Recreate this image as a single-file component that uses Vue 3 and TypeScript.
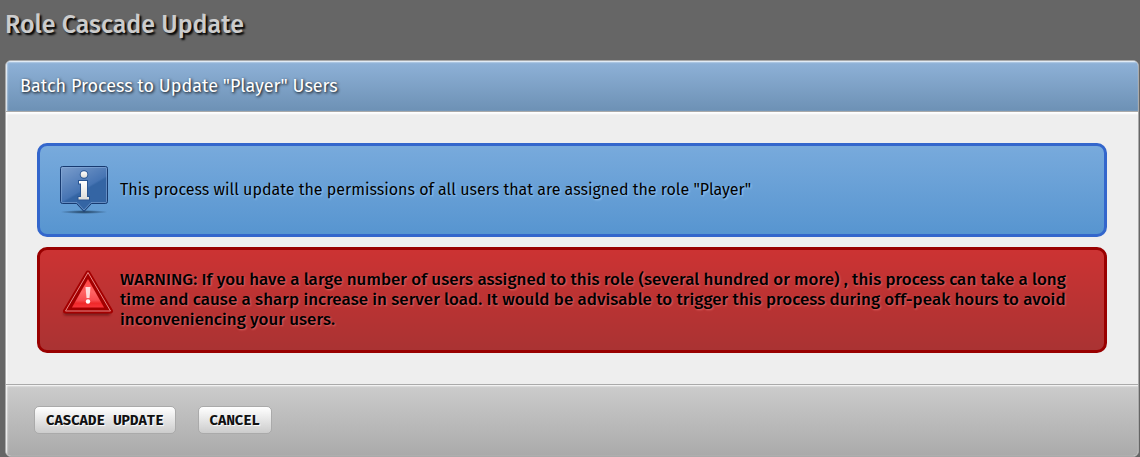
<script setup lang="ts">
import { ref } from 'vue'

const role = ref<string>('Player')
</script>

<template>
  <main class="page">
    <h1>Role Cascade Update</h1>
    <form class="panel" @submit.prevent>
      <header class="panel-header">
        <h2>Batch Process to Update "{{ role }}" Users</h2>
      </header>
      <div class="panel-body">
        <section class="notice info">
          <svg class="icon" viewBox="0 0 48 48" aria-hidden="true">
            <defs>
              <linearGradient id="infoFill" x1="0" y1="0" x2="0.6" y2="1">
                <stop offset="0" stop-color="#7d9fcd" />
                <stop offset="0.58" stop-color="#4674b3" />
                <stop offset="0.62" stop-color="#3465a4" />
                <stop offset="1" stop-color="#3465a4" />
              </linearGradient>
              <linearGradient id="glyphFill" x1="0" y1="0" x2="0" y2="1">
                <stop offset="0" stop-color="#ffffff" />
                <stop offset="1" stop-color="#dcdcd8" />
              </linearGradient>
              <radialGradient id="infoShadow">
                <stop offset="0" stop-color="#17334f" stop-opacity="0.9" />
                <stop offset="1" stop-color="#17334f" stop-opacity="0" />
              </radialGradient>
            </defs>
            <ellipse cx="24" cy="46" rx="24" ry="2" fill="url(#infoShadow)" />
            <path d="M2.500 .5h43a2 2 0 0 1 2 2v33a2 2 0 0 1-2 2H31.500L24 45.500 16.500 37.500H2.500a2 2 0 0 1-2-2v-33a2 2 0 0 1 2-2Z" fill="url(#infoFill)" stroke="#173a70" />
            <path d="M2.500 1.500h43a1 1 0 0 1 1 1v33a1 1 0 0 1-1 1H31L24 44 17 36.500H2.500a1 1 0 0 1-1-1v-33a1 1 0 0 1 1-1Z" fill="none" stroke="#8fb2de" stroke-opacity="0.5" />
            <g fill="url(#glyphFill)" stroke="#285491" stroke-width="2" paint-order="stroke">
              <circle cx="24" cy="8.500" r="3.300" />
              <path d="M19 15h8v16h2v2.500H18.500V31h2.500V17.500H19Z" />
            </g>
          </svg>
          <p>This process will update the permissions of all users that are assigned the role "{{ role }}"</p>
        </section>
        <section class="notice warning">
          <svg class="icon" viewBox="0 0 48 48" aria-hidden="true">
            <defs>
              <linearGradient id="warnFill" x1="0" y1="0" x2="0" y2="1">
                <stop offset="0" stop-color="#ff3c3c" />
                <stop offset="0.45" stop-color="#ff6464" />
                <stop offset="0.75" stop-color="#f84a4e" />
                <stop offset="0.85" stop-color="#ef2929" />
                <stop offset="1" stop-color="#f8343a" />
              </linearGradient>
              <filter id="warnBlur" x="-20%" y="-100%" width="140%" height="300%">
                <feGaussianBlur stdDeviation="1.500" />
              </filter>
            </defs>
            <path d="M4 41h46v4H4Z" fill="#4a0808" opacity="0.7" filter="url(#warnBlur)" />
            <path d="M28 3 50.500 41H5.500Z" fill="#a40000" stroke="#a40000" stroke-width="5" stroke-linejoin="round" />
            <path d="M28 2.500 50.500 41H5.500Z" fill="none" stroke="#e98787" stroke-linejoin="round" />
            <path d="M28 9 44 37.500H12Z" fill="url(#warnFill)" />
            <path d="M25.500 17h5L29.500 28h-3Z" fill="#ffdada" />
            <circle cx="28" cy="31.500" r="2.200" fill="#ffffff" />
          </svg>
          <p><strong>WARNING: If you have a large number of users assigned to this role (several hundred or more) , this process can take a long time and cause a sharp increase in server load. It would be advisable to trigger this process during off-peak hours to avoid inconveniencing your users.</strong></p>
        </section>
      </div>
      <footer class="panel-footer">
        <button type="submit">CASCADE UPDATE</button>
        <button type="button">CANCEL</button>
      </footer>
    </form>
  </main>
</template>

<style>
body {
  background: #666;
}
</style>

<style scoped>
.page {
  padding: 9px 1px 0 5px;
  font-family: "Fira Sans", "Noto Sans", sans-serif;
  font-size: 16px;
  line-height: 20px;
  color: #000;
}

h1,
h2,
p {
  margin: 0;
}

h1 {
  margin-bottom: 19px;
  font-size: 25px;
  line-height: 32px;
  font-weight: 500;
  color: #ccc;
  text-shadow: 2px 2px 2px #000;
}

.panel {
  border: 1px solid #aaa;
  border-radius: 6px;
  overflow: hidden;
  background: #eee;
}

.panel-header {
  padding: 15px 14px;
  border-bottom: 1px solid #aaa;
  background: linear-gradient(#8fb2d8, #6d91b5);
  box-shadow: inset 1px 1px 2px #fff;
}

h2 {
  font-size: 18px;
  line-height: 20px;
  font-weight: 400;
  color: #fff;
  text-shadow: 1px 1px 3px #000;
}

.panel-body {
  display: flex;
  flex-direction: column;
  gap: 10px;
  padding: 31px;
  box-shadow: inset 1px 2px 2px #fff;
}

.notice {
  display: flex;
  gap: 12px;
  padding: 20px;
  border: 3px solid;
  border-radius: 10px;
}

.icon {
  flex: none;
  width: 48px;
  height: 48px;
  overflow: visible;
}

.info {
  align-items: center;
  border-color: #36c;
  background: linear-gradient(#78aadc, #5795d0);
  text-shadow: 1px 1px 2px #9ccbf5;
}

.warning {
  border-color: #900;
  background: linear-gradient(#c33, #a33);
  font-size: 17px;
  text-shadow: 1px 1px 2px #e06666;
}

.warning strong {
  font-weight: 500;
}

.panel-footer {
  display: flex;
  gap: 22px;
  padding: 21px 28px 22px;
  border-top: 1px solid #aaa;
  background: linear-gradient(#ccc, #aaa);
  box-shadow: inset 1px 1px 2px #fff;
}

button {
  padding: 4px 11px 2px;
  border: 1px solid #aaa;
  border-radius: 5px;
  background: linear-gradient(#fff, #ccc);
  font-family: "Fira Mono", "DejaVu Sans Mono", monospace;
  font-size: 14px;
  line-height: 20px;
  font-weight: 700;
  color: #111;
  text-shadow: 1px 1px 1px #fff;
}
</style>
